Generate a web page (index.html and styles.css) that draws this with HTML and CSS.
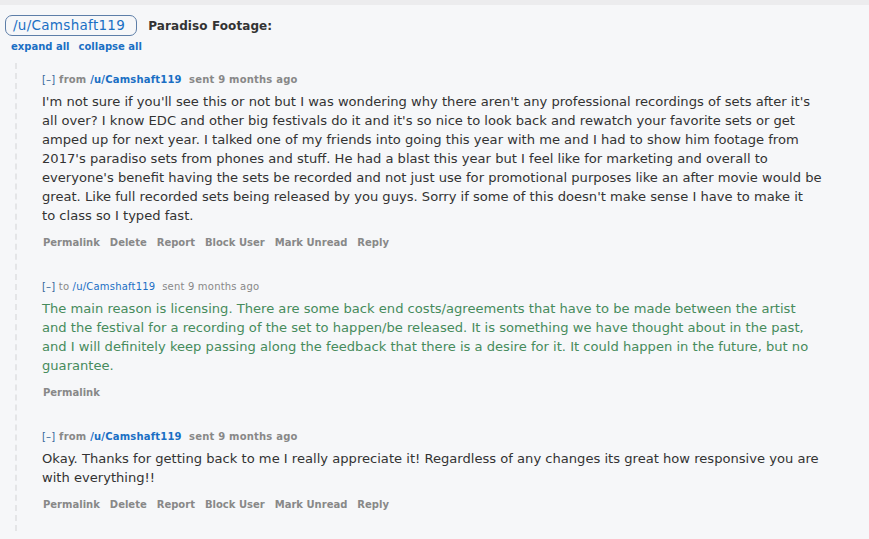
FILE: index.html
```html
<!DOCTYPE html>
<html>
<head>
<meta charset="utf-8">
<link rel="stylesheet" href="styles.css">
</head>
<body>
<div class="topbar"></div>
<div class="title-row">
  <span class="pill">/u/Camshaft119</span>
  <span class="subject">Paradiso Footage:</span>
</div>
<div class="expand-row">
  <a class="blue-link">expand all</a>
  <a class="blue-link">collapse all</a>
</div>
<div class="thread">
  <div class="message">
    <div class="tagline bold">
      <span class="toggle">[–]</span> from <span class="author">/u/Camshaft119</span>&nbsp; sent 9 months ago
    </div>
    <div class="md">I'm not sure if you'll see this or not but I was wondering why there aren't any professional recordings of sets after it's<br>all over? I know EDC and other big festivals do it and it's so nice to look back and rewatch your favorite sets or get<br>amped up for next year. I talked one of my friends into going this year with me and I had to show him footage from<br>2017's paradiso sets from phones and stuff. He had a blast this year but I feel like for marketing and overall to<br>everyone's benefit having the sets be recorded and not just use for promotional purposes like an after movie would be<br>great. Like full recorded sets being released by you guys. Sorry if some of this doesn't make sense I have to make it<br>to class so I typed fast.</div>
    <ul class="buttons">
      <li>Permalink</li><li>Delete</li><li>Report</li><li>Block User</li><li>Mark Unread</li><li>Reply</li>
    </ul>
  </div>
  <div class="message">
    <div class="tagline">
      <span class="toggle">[–]</span> to <span class="author plain">/u/Camshaft119</span>&nbsp; sent 9 months ago
    </div>
    <div class="md green">The main reason is licensing. There are some back end costs/agreements that have to be made between the artist<br>and the festival for a recording of the set to happen/be released. It is something we have thought about in the past,<br>and I will definitely keep passing along the feedback that there is a desire for it. It could happen in the future, but no<br>guarantee.</div>
    <ul class="buttons">
      <li>Permalink</li>
    </ul>
  </div>
  <div class="message">
    <div class="tagline bold">
      <span class="toggle">[–]</span> from <span class="author">/u/Camshaft119</span>&nbsp; sent 9 months ago
    </div>
    <div class="md">Okay. Thanks for getting back to me I really appreciate it! Regardless of any changes its great how responsive you are<br>with everything!!</div>
    <ul class="buttons">
      <li>Permalink</li><li>Delete</li><li>Report</li><li>Block User</li><li>Mark Unread</li><li>Reply</li>
    </ul>
  </div>
</div>
</body>
</html>
```
FILE: styles.css
```css
html, body {
  margin: 0;
  padding: 0;
  background: #f6f7f9;
  font-family: "DejaVu Sans", Verdana, sans-serif;
  color: #333;
}
.topbar {
  height: 5px;
  background: #ececee;
}
.title-row {
  display: flex;
  align-items: center;
  margin: 10px 0 0 5px;
}
.pill {
  display: inline-block;
  border: 1px solid #5d7ea8;
  border-radius: 7px;
  padding: 0 11px 0 7px;
  height: 19px;
  line-height: 19px;
  font-size: 13.5px;
  color: #1a6fc4;
  letter-spacing: 0.3px;
}
.subject {
  margin-left: 11px;
  font-size: 12px;
  font-weight: bold;
  color: #333;
  letter-spacing: 0.1px;
}
.expand-row {
  display: flex;
  gap: 9px;
  margin: 3px 0 0 11px;
  font-size: 10px;
  line-height: 16px;
}
.blue-link {
  color: #1a6fc4;
  font-weight: bold;
}
.thread {
  margin: 8px 0 0 15px;
  border-left: 2px dashed #e4e5e7;
  padding-left: 25px;
}
.message {
  padding: 9px 0 18px 0;
}
.message + .message {
  padding-top: 10px;
}
.tagline {
  font-size: 10px;
  line-height: 16px;
  color: #888;
  letter-spacing: 0.2px;
}
.tagline.bold {
  font-weight: bold;
}
.toggle {
  color: #369;
  font-weight: normal;
}
.author {
  color: #1a6fc4;
}
.md {
  margin-top: 4px;
  font-size: 13.1px;
  line-height: 19px;
  color: #333;
  white-space: nowrap;
}
.md.green {
  color: #468b5c;
}
.buttons {
  list-style: none;
  margin: 10px 0 0 0;
  padding: 0 0 0 1px;
  display: flex;
  gap: 10px;
  font-size: 10px;
  line-height: 16px;
  font-weight: bold;
  color: #888;
}
```
